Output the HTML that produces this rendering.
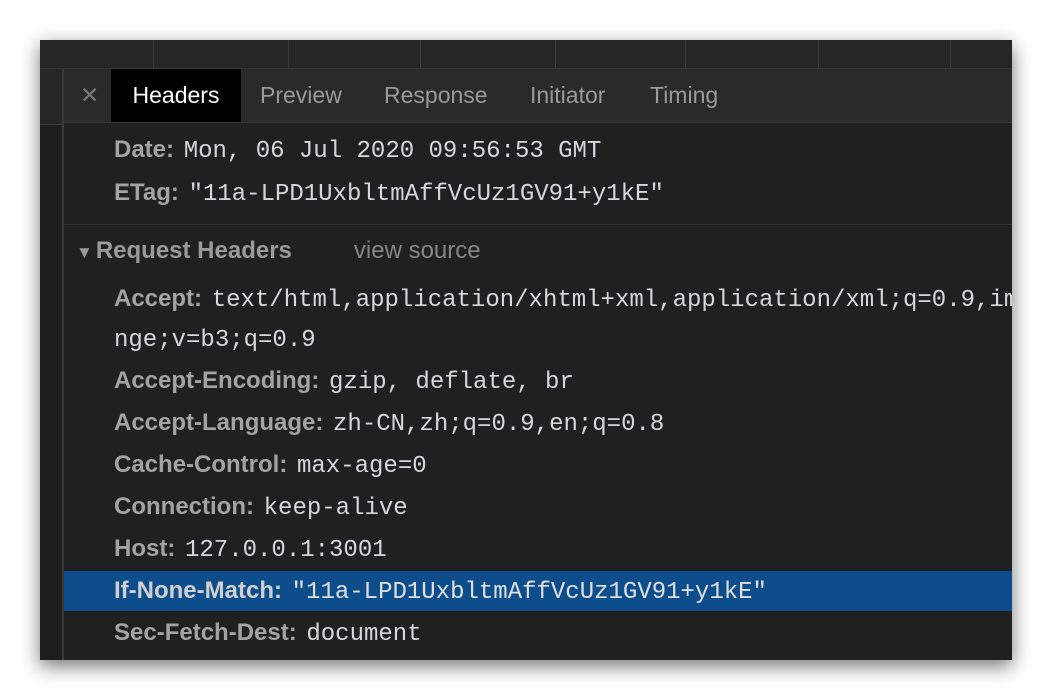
<!DOCTYPE html>
<html><head><style>
body{margin:0;width:1052px;height:700px;background:#fff;position:relative;overflow:hidden;font-family:"Liberation Sans",sans-serif}
.win{position:absolute;left:40px;top:40px;width:972px;height:620px;background:#202020;box-shadow:0 6px 18px rgba(0,0,0,.55);overflow:hidden}
.top{position:absolute;left:0;top:0;width:972px;height:28px;background:#262626;border-bottom:1px solid #333}
.top i{position:absolute;top:0;width:1px;height:28px;background:#3a3a3a}
.left{position:absolute;left:0;top:29px;width:22px;height:591px;background:#1e1e1e;border-right:2px solid #3a3a3a}
.left b{position:absolute;left:0;top:55px;width:22px;height:1px;background:#3a3a3a}
.left u{position:absolute;left:0;top:0;width:22px;height:55px;background:#262626}
.tabs{position:absolute;left:24px;top:29px;width:948px;height:53px;background:#2a2a2a;border-bottom:1px solid #3a3a3a}
.tab{position:absolute;top:0;height:53px;line-height:53px;font-size:23px;color:#9a9a9a}
.sel{background:#000;color:#fff;text-align:center}
.row{position:absolute;left:74px;font-size:24px;white-space:nowrap;color:#a3a3a3;font-weight:bold;height:42px;line-height:42px}
.row span{font-family:"Liberation Mono",monospace;font-weight:normal;color:#d4d7dc;font-size:24px;margin-left:3px}
.hl{position:absolute;left:24px;top:531px;width:948px;height:40px;background:#0e4d8c}
.sep{position:absolute;left:24px;top:184px;width:948px;height:1px;background:#353535}
</style></head><body>
<div class="win">
<div class="top"><i style="left:113px"></i><i style="left:248px"></i><i style="left:380px"></i><i style="left:515px"></i><i style="left:645px"></i><i style="left:778px"></i><i style="left:910px"></i></div>
<div class="left"><u></u><b></b></div>
<div class="tabs">
<div class="tab" style="left:16px;color:#777">✕</div>
<div class="tab sel" style="left:47px;width:130px">Headers</div>
<div class="tab" style="left:196px">Preview</div>
<div class="tab" style="left:320px">Response</div>
<div class="tab" style="left:466px">Initiator</div>
<div class="tab" style="left:586px">Timing</div>
</div>
<div class="row" style="top:89px">Date: <span>Mon, 06 Jul 2020 09:56:53 GMT</span></div>
<div class="row" style="top:132px">ETag: <span>"11a-LPD1UxbltmAffVcUz1GV91+y1kE"</span></div>
<div class="sep"></div>
<div class="row" style="top:190px;left:36px;color:#9a9a9a"><small style="font-size:17px;margin-right:3px">▼</small>Request Headers<em style="font-style:normal;font-weight:normal;color:#858585;margin-left:62px">view source</em></div>
<div class="row" style="top:238px">Accept: <span>text/html,application/xhtml+xml,application/xml;q=0.9,image/webp</span></div>
<div class="row" style="top:278px"><span style="margin-left:0">nge;v=b3;q=0.9</span></div>
<div class="row" style="top:320px">Accept-Encoding: <span>gzip, deflate, br</span></div>
<div class="row" style="top:362px">Accept-Language: <span>zh-CN,zh;q=0.9,en;q=0.8</span></div>
<div class="row" style="top:404px">Cache-Control: <span>max-age=0</span></div>
<div class="row" style="top:446px">Connection: <span>keep-alive</span></div>
<div class="row" style="top:488px">Host: <span>127.0.0.1:3001</span></div>
<div class="hl"></div>
<div class="row" style="top:530px;color:#d0d0d0">If-None-Match: <span style="color:#e0e0e0">"11a-LPD1UxbltmAffVcUz1GV91+y1kE"</span></div>
<div class="row" style="top:572px">Sec-Fetch-Dest: <span>document</span></div>
</div>
</body></html>
